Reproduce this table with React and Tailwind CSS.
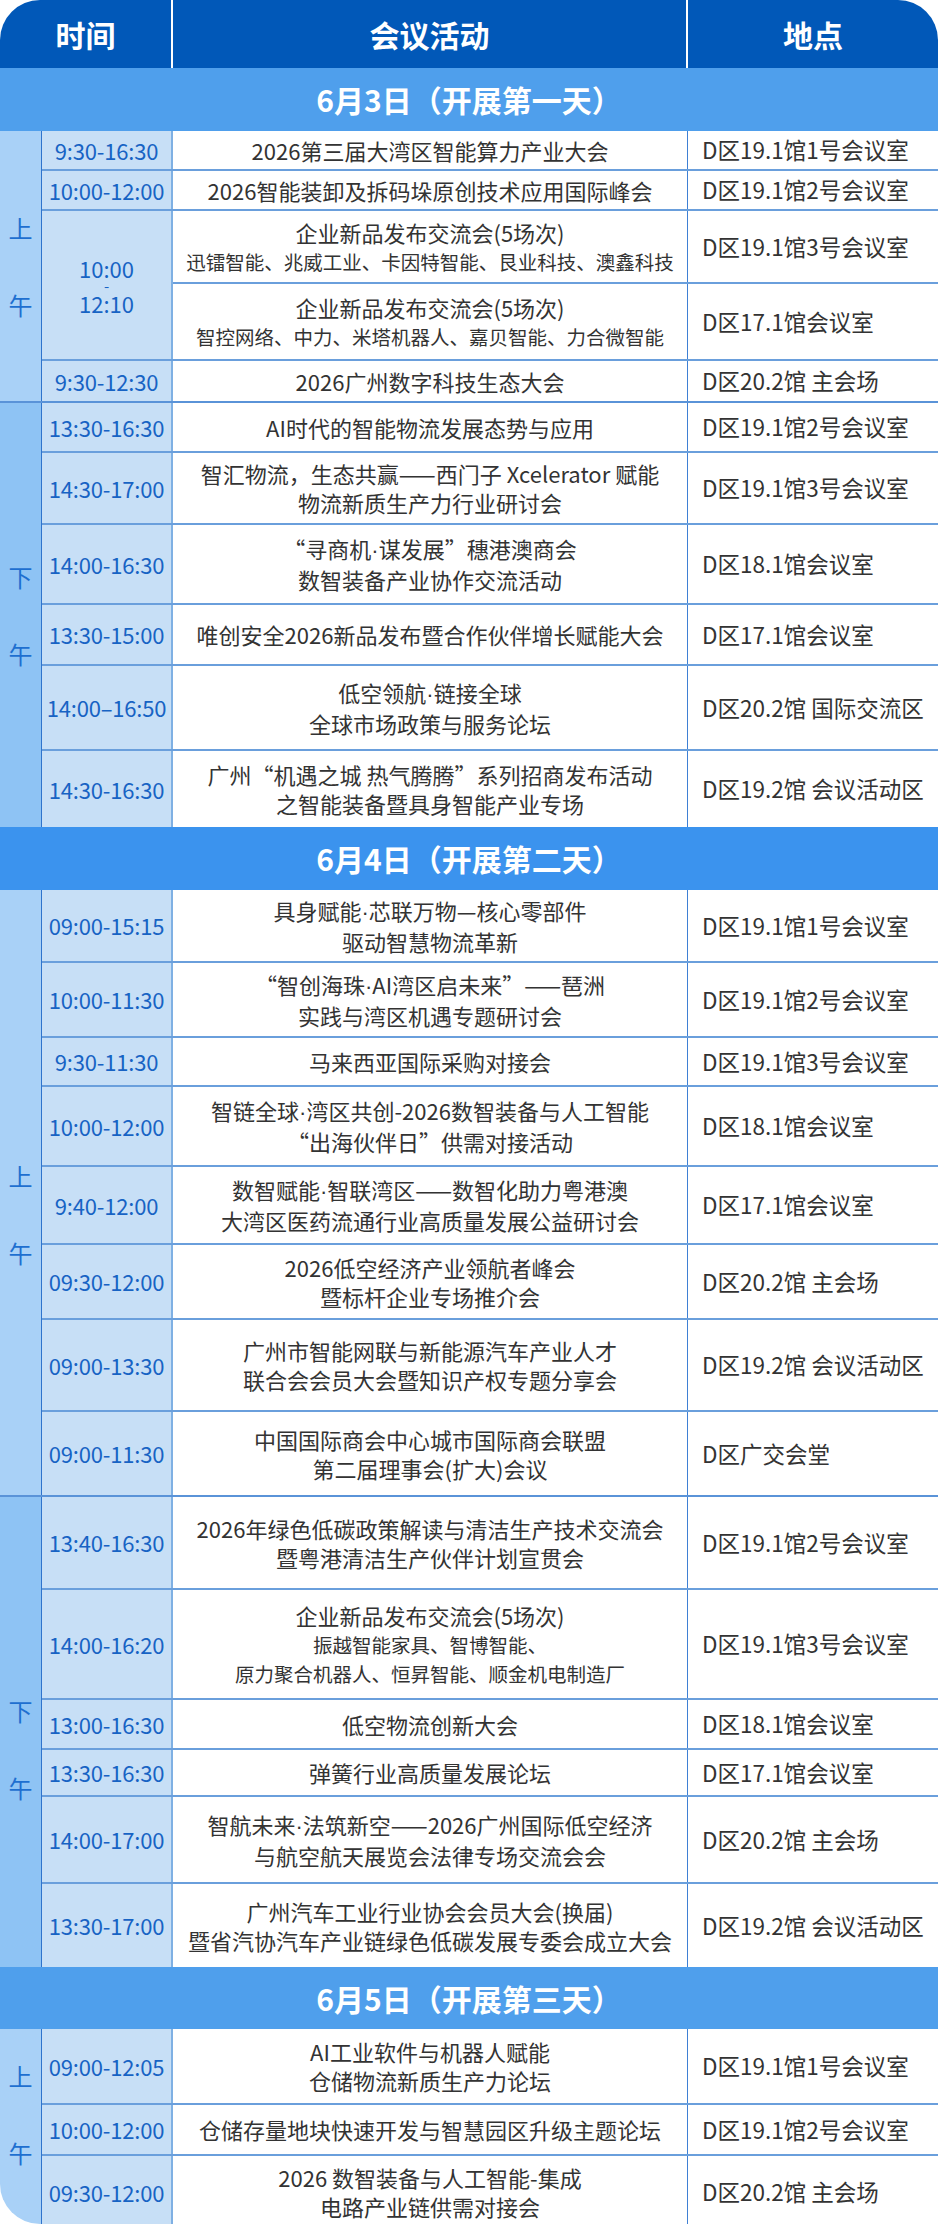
import React from "react";

const day1AM = [
  { t: "9:30-16:30", a: ["2026第三届大湾区智能算力产业大会"], p: "D区19.1馆1号会议室", h: "h-[38px]" },
  { t: "10:00-12:00", a: ["2026智能装卸及拆码垛原创技术应用国际峰会"], p: "D区19.1馆2号会议室", h: "h-[40px]" },
  {
    span: true,
    h: "h-[150px]",
    rows: [
      { a: ["企业新品发布交流会(5场次)"], s: ["迅镭智能、兆威工业、卡因特智能、艮业科技、澳鑫科技"], p: "D区19.1馆3号会议室", h: "h-[72px]" },
      { a: ["企业新品发布交流会(5场次)"], s: ["智控网络、中力、米塔机器人、嘉贝智能、力合微智能"], p: "D区17.1馆会议室", h: "h-[78px]" },
    ],
  },
  { t: "9:30-12:30", a: ["2026广州数字科技生态大会"], p: "D区20.2馆 主会场", h: "h-[42px]" },
];

const day1PM = [
  { t: "13:30-16:30", a: ["AI时代的智能物流发展态势与应用"], p: "D区19.1馆2号会议室", h: "h-[48px]" },
  { t: "14:30-17:00", a: ["智汇物流，生态共赢——西门子 Xcelerator 赋能", "物流新质生产力行业研讨会"], p: "D区19.1馆3号会议室", h: "h-[72px]" },
  { t: "14:00-16:30", a: ["“寻商机·谋发展”穗港澳商会", "数智装备产业协作交流活动"], p: "D区18.1馆会议室", h: "h-[80px]" },
  { t: "13:30-15:00", a: ["唯创安全2026新品发布暨合作伙伴增长赋能大会"], p: "D区17.1馆会议室", h: "h-[61px]" },
  { t: "14:00–16:50", a: ["低空领航·链接全球", "全球市场政策与服务论坛"], p: "D区20.2馆 国际交流区", h: "h-[85px]" },
  { t: "14:30-16:30", a: ["广州“机遇之城 热气腾腾”系列招商发布活动", "之智能装备暨具身智能产业专场"], p: "D区19.2馆 会议活动区", h: "h-[78px]" },
];

const day2AM = [
  { t: "09:00-15:15", a: ["具身赋能·芯联万物—核心零部件", "驱动智慧物流革新"], p: "D区19.1馆1号会议室", h: "h-[71px]" },
  { t: "10:00-11:30", a: ["“智创海珠·AI湾区启未来”——琶洲", "实践与湾区机遇专题研讨会"], p: "D区19.1馆2号会议室", h: "h-[75px]" },
  { t: "9:30-11:30", a: ["马来西亚国际采购对接会"], p: "D区19.1馆3号会议室", h: "h-[49px]" },
  { t: "10:00-12:00", a: ["智链全球·湾区共创-2026数智装备与人工智能", "“出海伙伴日”供需对接活动"], p: "D区18.1馆会议室", h: "h-[80px]" },
  { t: "9:40-12:00", a: ["数智赋能·智联湾区——数智化助力粤港澳", "大湾区医药流通行业高质量发展公益研讨会"], p: "D区17.1馆会议室", h: "h-[78px]" },
  { t: "09:30-12:00", a: ["2026低空经济产业领航者峰会", "暨标杆企业专场推介会"], p: "D区20.2馆 主会场", h: "h-[75px]" },
  { t: "09:00-13:30", a: ["广州市智能网联与新能源汽车产业人才", "联合会会员大会暨知识产权专题分享会"], p: "D区19.2馆 会议活动区", h: "h-[92px]" },
  { t: "09:00-11:30", a: ["中国国际商会中心城市国际商会联盟", "第二届理事会(扩大)会议"], p: "D区广交会堂", h: "h-[85px]" },
];

const day2PM = [
  { t: "13:40-16:30", a: ["2026年绿色低碳政策解读与清洁生产技术交流会", "暨粤港清洁生产伙伴计划宣贯会"], p: "D区19.1馆2号会议室", h: "h-[91px]" },
  { t: "14:00-16:20", a: ["企业新品发布交流会(5场次)"], s: ["振越智能家具、智博智能、", "原力聚合机器人、恒昇智能、顺金机电制造厂"], p: "D区19.1馆3号会议室", h: "h-[110px]" },
  { t: "13:00-16:30", a: ["低空物流创新大会"], p: "D区18.1馆会议室", h: "h-[50px]" },
  { t: "13:30-16:30", a: ["弹簧行业高质量发展论坛"], p: "D区17.1馆会议室", h: "h-[47px]" },
  { t: "14:00-17:00", a: ["智航未来·法筑新空——2026广州国际低空经济", "与航空航天展览会法律专场交流会会"], p: "D区20.2馆 主会场", h: "h-[87px]" },
  { t: "13:30-17:00", a: ["广州汽车工业行业协会会员大会(换届)", "暨省汽协汽车产业链绿色低碳发展专委会成立大会"], p: "D区19.2馆 会议活动区", h: "h-[85px]" },
];

const day3AM = [
  { t: "09:00-12:05", a: ["AI工业软件与机器人赋能", "仓储物流新质生产力论坛"], p: "D区19.1馆1号会议室", h: "h-[74px]" },
  { t: "10:00-12:00", a: ["仓储存量地块快速开发与智慧园区升级主题论坛"], p: "D区19.1馆2号会议室", h: "h-[51px]" },
  { t: "09:30-12:00", a: ["2026 数智装备与人工智能-集成", "电路产业链供需对接会"], p: "D区20.2馆 主会场", h: "h-[74px]" },
];

function Text({ line }) {
  const parts = line.split("·");
  return (
    <>
      {parts.map((part, i) => (
        <React.Fragment key={i}>
          {i > 0 && <span className="font-['Liberation_Sans',sans-serif]">·</span>}
          {part}
        </React.Fragment>
      ))}
    </>
  );
}

function Activity({ a, s }) {
  return (
    <div className="w-[515px] shrink-0 flex flex-col items-center justify-center border-r border-[#3f80d4] text-[#333333]">
      {a.map((line, i) => (
        <div key={i} className="whitespace-nowrap text-[22px] leading-[29px]">
          <Text line={line} />
        </div>
      ))}
      {s &&
        s.map((line, i) => (
          <div key={"s" + i} className="whitespace-nowrap text-[19.5px] leading-[29px]">
            {line}
          </div>
        ))}
    </div>
  );
}

function Place({ p }) {
  return (
    <div className="flex-1 flex items-center pl-[14px] text-[22.5px] text-[#333333] whitespace-nowrap">
      {p}
    </div>
  );
}

function TimeCell({ t }) {
  return (
    <div className="w-[131px] shrink-0 flex items-center justify-center bg-[#c7dff6] border-r-2 border-[#7fb0e3] text-[22px] text-[#1763c4] whitespace-nowrap tracking-[-0.2px]">
      {t}
    </div>
  );
}

function Row({ r, first }) {
  if (r.span) {
    return (
      <div className={`flex ${r.h} ${first ? "" : "border-t-2 border-[#6a9fdc]"}`}>
        <div className="w-[131px] shrink-0 flex flex-col items-center justify-center bg-[#c7dff6] border-r-2 border-[#7fb0e3] text-[22px] text-[#1763c4]">
          <div className="h-[22px] leading-[22px]">10:00</div>
          <div className="h-[13px] leading-[13px] text-[15px]">-</div>
          <div className="h-[22px] leading-[22px]">12:10</div>
        </div>
        <div className="flex-1 flex flex-col">
          {r.rows.map((sr, i) => (
            <div key={i} className={`flex ${sr.h} ${i === 0 ? "" : "border-t-2 border-[#6a9fdc]"}`}>
              <Activity a={sr.a} s={sr.s} />
              <Place p={sr.p} />
            </div>
          ))}
        </div>
      </div>
    );
  }
  return (
    <div className={`flex ${r.h} ${first ? "" : "border-t-2 border-[#6a9fdc]"}`}>
      <TimeCell t={r.t} />
      <Activity a={r.a} s={r.s} />
      <Place p={r.p} />
    </div>
  );
}

function Section({ rows, labels, bg, shift, top }) {
  return (
    <div className={`flex ${top ? "border-t-2 border-[#5a93d8]" : ""}`}>
      <div className={`w-[42px] shrink-0 flex flex-col items-center justify-center border-r border-[#2f74cc] ${bg}`}>
        <div className={`flex flex-col items-center gap-[53px] text-[24px] leading-[24px] text-[#1e6fd0] ${shift}`}>
          <span>{labels[0]}</span>
          <span>{labels[1]}</span>
        </div>
      </div>
      <div className="flex-1 flex flex-col">
        {rows.map((r, i) => (
          <Row key={i} r={r} first={i === 0} />
        ))}
      </div>
    </div>
  );
}

function DayHeader({ text, bg, h }) {
  return (
    <div className={`flex items-center justify-center text-white font-bold text-[30px] ${h} ${bg}`}>
      {text}
    </div>
  );
}

export default function App() {
  return (
    <div className="w-[938px] h-[2224px] bg-white">
      <div className="w-[938px] h-[2224px] overflow-hidden rounded-[40px] font-['Noto_Sans_CJK_SC','Noto_Sans',sans-serif]">
        <div className="flex h-[68px] bg-[#0158b8] text-white font-bold text-[30px]">
          <div className="w-[173px] shrink-0 flex items-center justify-center border-r-2 border-white">时间</div>
          <div className="w-[515px] shrink-0 flex items-center justify-center border-r-2 border-white">会议活动</div>
          <div className="flex-1 flex items-center justify-center">地点</div>
        </div>
        <DayHeader text="6月3日（开展第一天）" bg="bg-[#4f9fec]" h="h-[63px]" />
        <Section rows={day1AM} labels={["上", "午"]} bg="bg-[#a9d1f7]" shift="" />
        <Section rows={day1PM} labels={["下", "午"]} bg="bg-[#8ec3f4]" shift="" top />
        <DayHeader text="6月4日（开展第二天）" bg="bg-[#3b93ee]" h="h-[63px]" />
        <Section rows={day2AM} labels={["上", "午"]} bg="bg-[#a9d1f7]" shift="translate-y-[22px]" />
        <Section rows={day2PM} labels={["下", "午"]} bg="bg-[#8ec3f4]" shift="translate-y-[17px]" top />
        <DayHeader text="6月5日（开展第三天）" bg="bg-[#4f9fec]" h="h-[62px]" />
        <Section rows={day3AM} labels={["上", "午"]} bg="bg-[#a9d1f7]" shift="-translate-y-[14px]" />
      </div>
    </div>
  );
}
